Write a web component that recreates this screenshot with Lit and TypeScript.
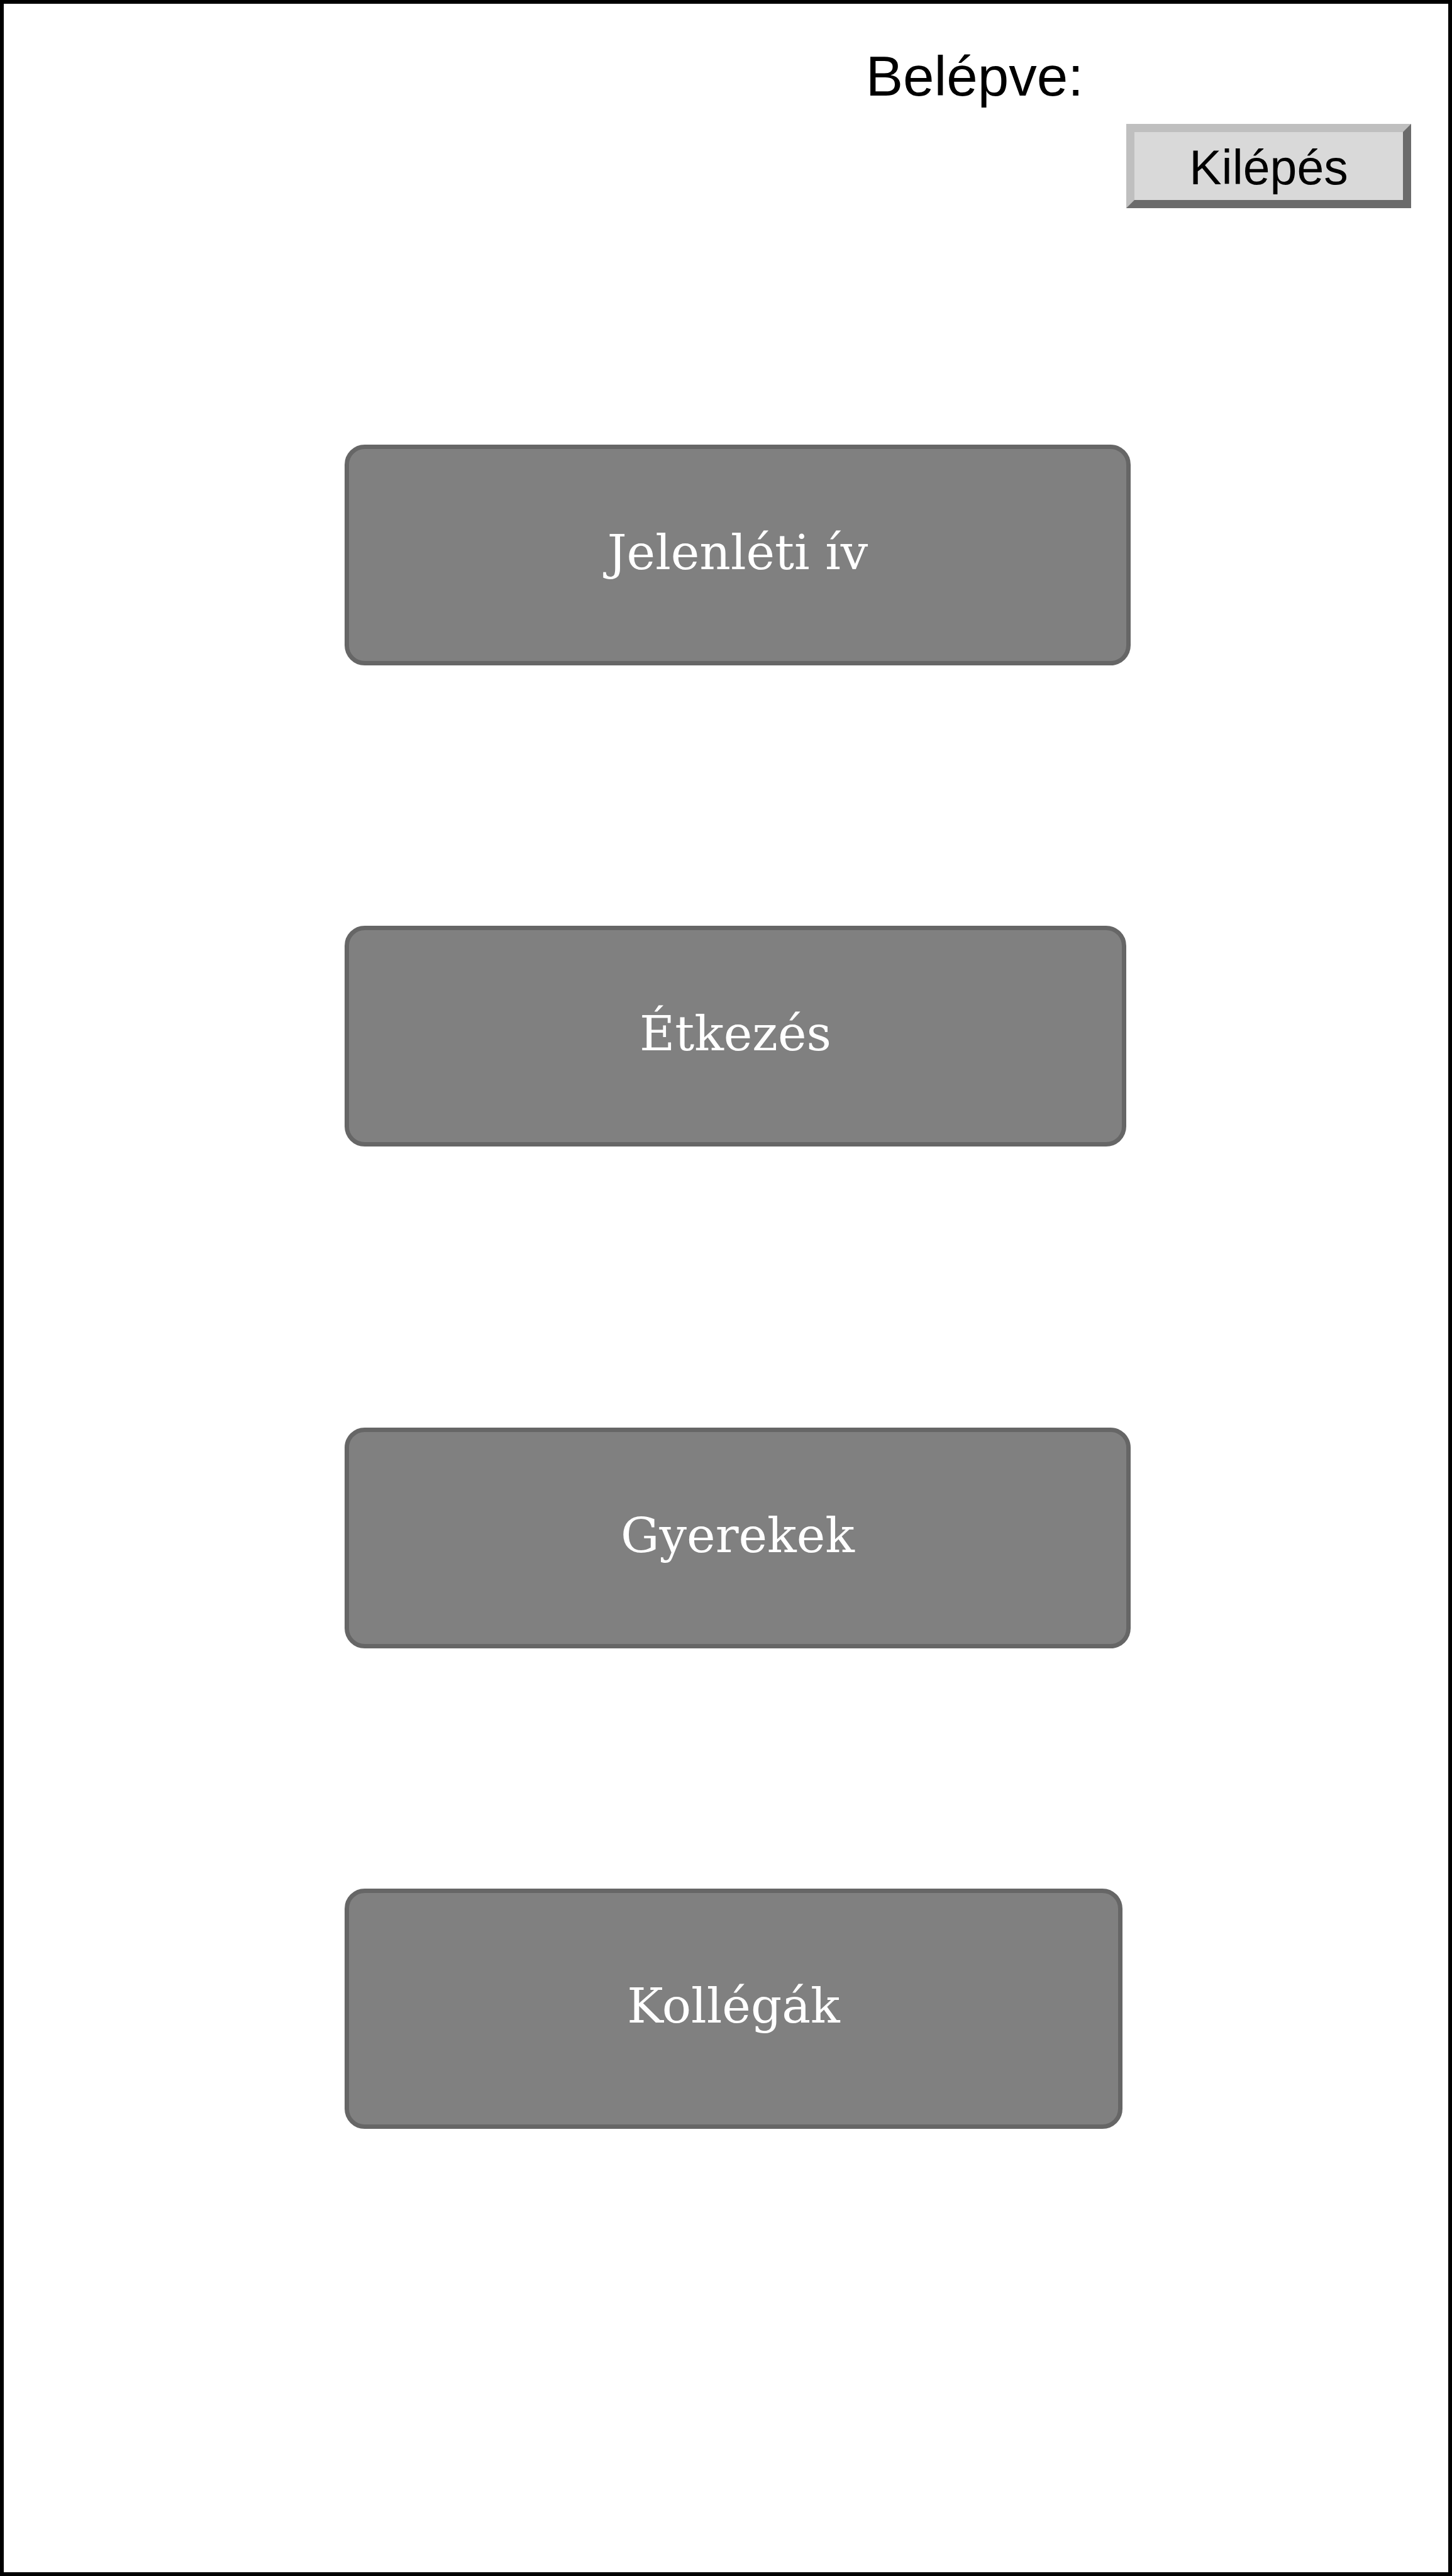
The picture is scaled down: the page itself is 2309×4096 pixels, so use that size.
import { LitElement, html, css } from "lit";
import { customElement } from "lit/decorators.js";

@customElement("app-root")
class AppRoot extends LitElement {
  static styles = css`
    :host { display: block; }
    * { box-sizing: border-box; }
    .screen {
      min-height: 100vh;
      border: 6px solid #000;
      background: #fff;
      padding: 65px 59px 0 542px;
      display: flex;
      flex-direction: column;
      font-family: "Liberation Sans", Arial, sans-serif;
      color: #000;
    }
    .top { display: flex; flex-direction: column; align-items: flex-end; }
    .user { font-size: 89px; line-height: 100px; margin: 0 521px 0 0; }
    .exit {
      width: 453px;
      height: 134px;
      margin-top: 26px;
      border: 13px solid;
      border-color: #bfbfbf #6b6b6b #6b6b6b #bfbfbf;
      background: #d9d9d9;
      color: #000;
      font: 77px/88px "Liberation Sans", Arial, sans-serif;
      padding: 4px 0 0;
    }
    .menu { display: flex; flex-direction: column; align-items: flex-start; margin-top: 376px; }
    .item {
      width: 1250px;
      height: 351px;
      border: 7px solid #666;
      border-radius: 32px;
      background: #808080;
      color: #fff;
      font: 77px/88px "DejaVu Serif", serif;
      padding: 0 0 8px;
    }
    .meals { width: 1243px; margin-top: 414px; }
    .children { margin-top: 447px; }
    .staff { width: 1237px; height: 382px; margin-top: 382px; }
  `;
  render() {
    return html`
      <main class="screen">
        <header class="top">
          <p class="user">Belépve:</p>
          <button class="exit" type="button">Kilépés</button>
        </header>
        <nav class="menu">
          <button class="item" type="button">Jelenléti ív</button>
          <button class="item meals" type="button">Étkezés</button>
          <button class="item children" type="button">Gyerekek</button>
          <button class="item staff" type="button">Kollégák</button>
        </nav>
      </main>
    `;
  }
}
